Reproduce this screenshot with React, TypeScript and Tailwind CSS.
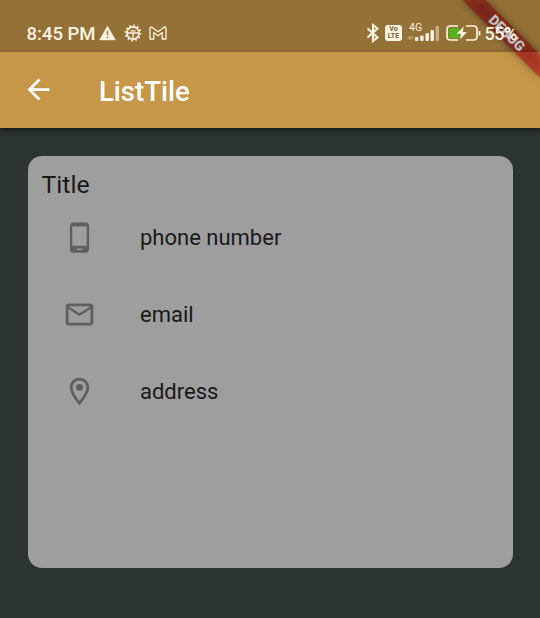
import React from "react";

const font = "font-['Roboto','Noto_Sans',sans-serif]";

function StatusBar() {
  return (
    <div className="relative z-30 flex h-[51.5px] shrink-0 items-start bg-black/25 pt-[22px] text-[18px] leading-[24px] text-[#fdf3e2]">
      <span className="ml-[26.5px] w-[72.5px] whitespace-nowrap text-[18.5px] font-medium">8:45 PM</span>
      <svg className="mt-[3px] h-[16px] w-[17px]" viewBox="0 0 17 16" fill="currentColor">
        <path
          fillRule="evenodd"
          stroke="currentColor"
          strokeWidth=".4"
          d="M8.5 1 16.5 15H.5ZM7.6 5.8v4.4h1.8V5.8ZM7.6 11.4v1.8h1.8v-1.8Z"
        />
      </svg>
      <svg className="ml-[8px] mt-[2px] h-[18px] w-[18px]" viewBox="0 0 18 18" fill="none" stroke="currentColor">
        <circle cx="9" cy="9" r="6.1" strokeWidth="1.6" />
        <circle cx="9" cy="9" r="7.5" strokeWidth="1.8" strokeDasharray="1.6 2.327" />
        <path d="M3 9h12M9 9v5M6.5 6.8h5" strokeWidth="1.3" />
      </svg>
      <svg className="ml-[7px] mt-[4px] h-[14px] w-[18px]" viewBox="0 0 18 14" fill="none" stroke="currentColor" strokeWidth="1.3" strokeLinejoin="round">
        <path d="M1 2.5Q1 1 2.6 1L9 5.8 15.4 1Q17 1 17 2.5V13H13.2V6.6L9 9.8 4.8 6.6V13H1Z" />
      </svg>

      <svg className="ml-[199px] mt-[1px] h-[20px] w-[14px]" viewBox="0 0 14 20" fill="none" stroke="currentColor" strokeWidth="2.1">
        <path d="M1.5 5.5 11.5 14.5 7 18V2L11.5 5.5 1.5 14.5" />
      </svg>
      <div className="ml-[5px] mt-[3px] flex h-[16px] w-[17px] flex-col items-center justify-center rounded-[3px] bg-[#fdf3e2] text-[7px] font-bold leading-[7px] text-[#7d5e2d]">
        <span>Vo</span>
        <span>LTE</span>
      </div>
      <div className="relative ml-[5px] h-[24px] w-[34px]">
        <span className="absolute left-[2px] top-[1px] text-[10.5px] leading-[10px]">4G</span>
        <span className="absolute left-0 top-[12px] text-[6px] leading-[8px] opacity-50">4P</span>
        <svg className="absolute left-[8px] top-[4px] h-[15px] w-[25px]" viewBox="0 0 25 15" fill="currentColor">
          <rect x="0" y="11" width="3.4" height="4" rx="1" />
          <rect x="5.2" y="9.5" width="3.4" height="5.5" rx="1" />
          <rect x="10.5" y="7" width="3.4" height="8" rx="1" />
          <rect x="15.5" y="4" width="3.4" height="11" rx="1" />
          <rect x="20.7" y="0" width="3.2" height="15" rx="1" opacity=".5" />
        </svg>
      </div>
      <svg className="ml-[5px] mt-[3px] h-[16px] w-[35px]" viewBox="0 0 35 16" fill="none">
        <path d="M4 3H13V13H4Q3 13 3 12V4Q3 3 4 3Z" fill="#4fb51b" />
        <path d="M12 1H4.5Q1 1 1 4.5V11.5Q1 15 4.5 15H12M20 1H27.5Q31 1 31 4.5V11.5Q31 15 27.5 15H20" stroke="currentColor" strokeWidth="1.7" />
        <path d="M17.8 1.5 10.5 8.8H14.8L14 14.5 21 7H16.8Z" fill="currentColor" />
        <path d="M33.5 6v4.5" stroke="currentColor" strokeWidth="1.8" />
      </svg>
      <span className="ml-[3.5px] whitespace-nowrap text-[18px] font-medium tracking-[-0.5px]">55%</span>
    </div>
  );
}

function DebugBanner() {
  return (
    <svg className="absolute right-0 top-0 z-20 h-[90px] w-[90px]" viewBox="0 0 90 90">
      <defs>
        <filter id="shade" x="-20%" y="-20%" width="140%" height="140%">
          <feGaussianBlur stdDeviation="4" />
        </filter>
      </defs>
      <path d="M12.2 0H35.6L90 54.4V77.8Z" fill="#000" opacity=".4" filter="url(#shade)" />
      <path d="M12.2 0H35.6L90 54.4V77.8Z" fill="#b71c1c" fillOpacity=".63" />
      <text
        x="57"
        y="38"
        transform="rotate(45 57 33)"
        textAnchor="middle"
        fill="#fff"
        className="font-['Roboto',sans-serif] text-[14px] font-black"
      >
        DEBUG
      </text>
    </svg>
  );
}

const rows = [
  {
    label: "phone number",
    path: "M16.5 1h-9C6.1 1 5 2.1 5 3.5v17C5 21.9 6.1 23 7.5 23h9c1.4 0 2.5-1.1 2.5-2.5v-17C19 2.1 17.9 1 16.5 1zm.75 17H6.75V4h10.5v14zM14 21h-4v-1h4v1z",
  },
  {
    label: "email",
    path: "M22 6c0-1.1-.9-2-2-2H4c-1.1 0-2 .9-2 2v12c0 1.1.9 2 2 2h16c1.1 0 2-.9 2-2V6zm-2 0-8 5-8-5h16zm0 12H4V8l8 5 8-5v10z",
  },
  {
    label: "address",
    path: "M12 2C8.13 2 5 5.13 5 9c0 5.25 7 13 7 13s7-7.75 7-13c0-3.87-3.13-7-7-7zM7 9c0-2.76 2.24-5 5-5s5 2.24 5 5c0 2.88-2.88 7.19-5 9.88C9.92 16.21 7 11.85 7 9zM12 6.5a2.5 2.5 0 1 0 0 5a2.5 2.5 0 1 0 0-5z",
  },
];

export default function App() {
  return (
    <div className={`relative flex h-[618px] w-[540px] flex-col overflow-hidden bg-[#2c3333] ${font}`}>
      <div className="shrink-0 bg-[#c69749]">
        <StatusBar />
      </div>
      <header className="z-10 flex h-[76.5px] shrink-0 items-center bg-[#c69749] text-white shadow-[0_2px_5px_rgba(0,0,0,0.55)]">
        <svg className="ml-[22px] h-[33px] w-[33px]" viewBox="0 0 24 24" fill="currentColor">
          <path d="M20 11H7.83l5.59-5.59L12 4l-8 8 8 8 1.41-1.41L7.83 13H20v-2z" />
        </svg>
        <h1 className="ml-[44px] mt-[4px] text-[27.5px] font-medium leading-[32px]">ListTile</h1>
      </header>
      <main className="mx-[27.5px] mt-[28px] h-[412px] rounded-[14px] bg-[#9e9e9e] pt-[13.5px] text-[#191919]">
        <h2 className="ml-[14px] text-[24.75px] leading-[29px]">Title</h2>
        <ul>
          {rows.map((row) => (
            <li key={row.label} className="flex h-[77px] items-center pl-[35.5px]">
              <svg className="h-[33px] w-[33px] text-[#5f5f5f]" viewBox="0 0 24 24" fill="currentColor">
                <path d={row.path} />
              </svg>
              <span className="ml-[44px] mt-[1px] text-[22px] leading-[26px]">{row.label}</span>
            </li>
          ))}
        </ul>
      </main>
      <DebugBanner />
    </div>
  );
}
